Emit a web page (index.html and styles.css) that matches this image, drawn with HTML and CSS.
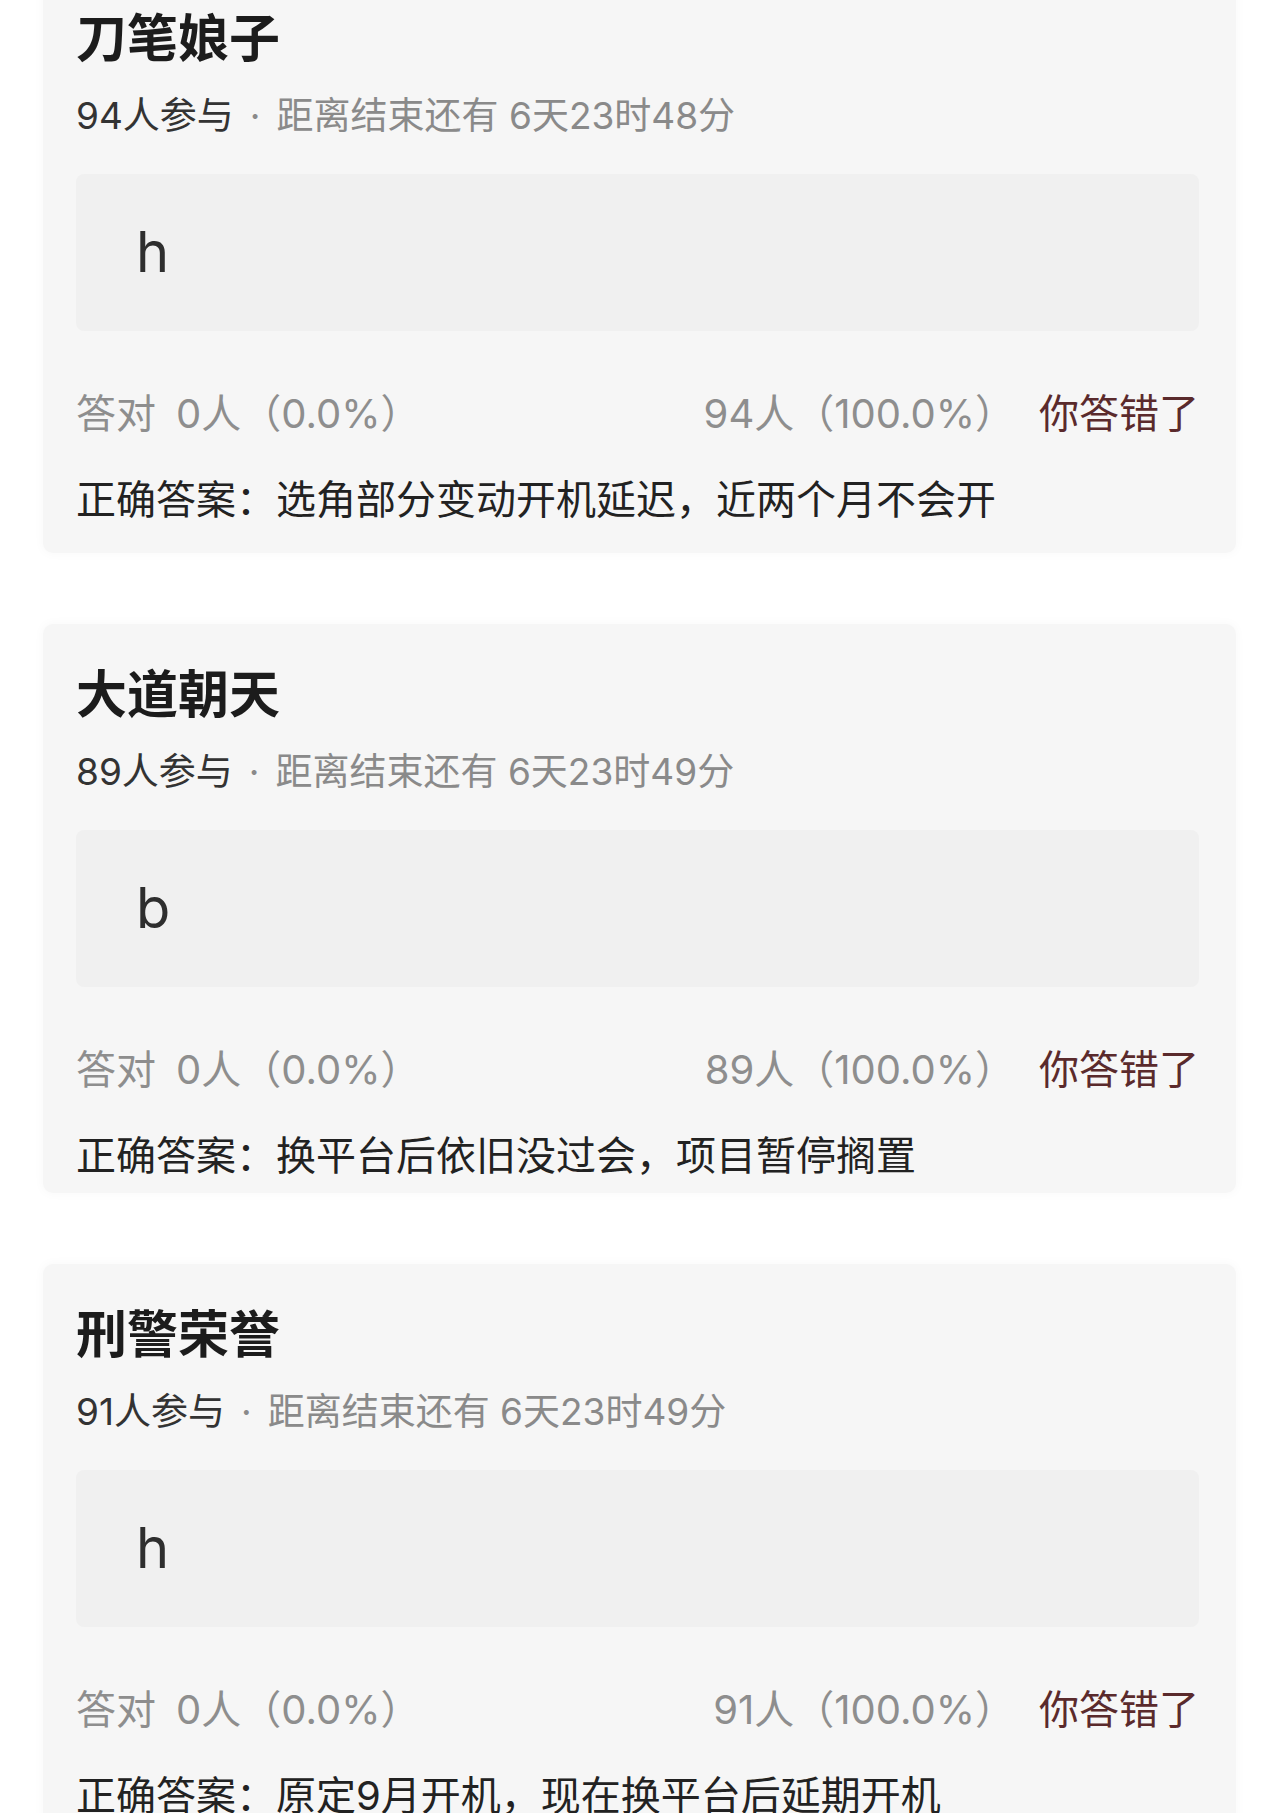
FILE: index.html
```html
<!DOCTYPE html>
<html>
<head>
    <meta charset="utf-8">
    <meta name="viewport" content="width=device-width,user-scalable=no,initial-scale=1">
    <title>竞猜记录</title>
    <link rel="stylesheet" href="styles.css">
</head>
<body>
    <div class="list">
        <div class="card">
            <h2 class="title">刀笔娘子</h2>
            <p class="meta"><span class="join">94人参与</span><span class="dot">·</span>距离结束还有 6天23时48分</p>
            <div class="pick">h</div>
            <div class="stats">
                <span class="right">答对<span class="num">0人（0.0%）</span></span>
                <span class="wrong">94人（100.0%）</span>
                <span class="mine">你答错了</span>
            </div>
            <p class="answer">正确答案：选角部分变动开机延迟，近两个月不会开</p>
        </div>
        <div class="card">
            <h2 class="title">大道朝天</h2>
            <p class="meta"><span class="join">89人参与</span><span class="dot">·</span>距离结束还有 6天23时49分</p>
            <div class="pick">b</div>
            <div class="stats">
                <span class="right">答对<span class="num">0人（0.0%）</span></span>
                <span class="wrong">89人（100.0%）</span>
                <span class="mine">你答错了</span>
            </div>
            <p class="answer">正确答案：换平台后依旧没过会，项目暂停搁置</p>
        </div>
        <div class="card">
            <h2 class="title">刑警荣誉</h2>
            <p class="meta"><span class="join">91人参与</span><span class="dot">·</span>距离结束还有 6天23时49分</p>
            <div class="pick">h</div>
            <div class="stats">
                <span class="right">答对<span class="num">0人（0.0%）</span></span>
                <span class="wrong">91人（100.0%）</span>
                <span class="mine">你答错了</span>
            </div>
            <p class="answer">正确答案：原定9月开机，现在换平台后延期开机</p>
        </div>
    </div>
</body>
</html>
```

FILE: styles.css
```css
*{margin:0;padding:0;list-style: none;}
html,body{background:#fff;}
body{
    font-family: Inter, "Noto Sans CJK SC", sans-serif;
    color: #222;
    overflow: hidden;
}
.list{
    padding: 0 44px 0 43px;
    margin-top: -32px;
    display: flex;
    flex-direction: column;
    gap: 71px;
}
.card{
    background: #f6f6f6;
    border-radius: 10px;
    padding: 37px 37px 11px 33px;
    box-shadow: 0 0 10px 2px rgba(0,0,0,0.025);
}
.card:first-child{padding-bottom: 27px;}
.title{
    font-family: "Noto Sans CJK SC", sans-serif;
    font-size: 51px;
    line-height: 60px;
    font-weight: bold;
    color: #1c1c1c;
}
.meta{
    margin-top: 27px;
    font-size: 37px;
    line-height: 48px;
    color: #8a8a8a;
}
.meta .join{color: #333;}
.meta .dot{margin: 0 16px;}
.pick{
    margin-top: 34px;
    height: 157px;
    line-height: 157px;
    padding-left: 60px;
    background: #f0f0f0;
    border-radius: 8px;
    font-size: 56px;
    color: #2e2e2e;
}
.stats{
    margin-top: 57px;
    display: flex;
    align-items: center;
    gap: 24px;
    font-size: 40px;
    line-height: 52px;
    color: #8e8e8e;
}
.stats .right{flex: 1;}
.stats .num{margin-left: 20px;}
.stats .mine{color: #5a2a2c;}
.answer{
    margin-top: 34px;
    font-size: 40px;
    line-height: 52px;
    color: #222;
}
```
